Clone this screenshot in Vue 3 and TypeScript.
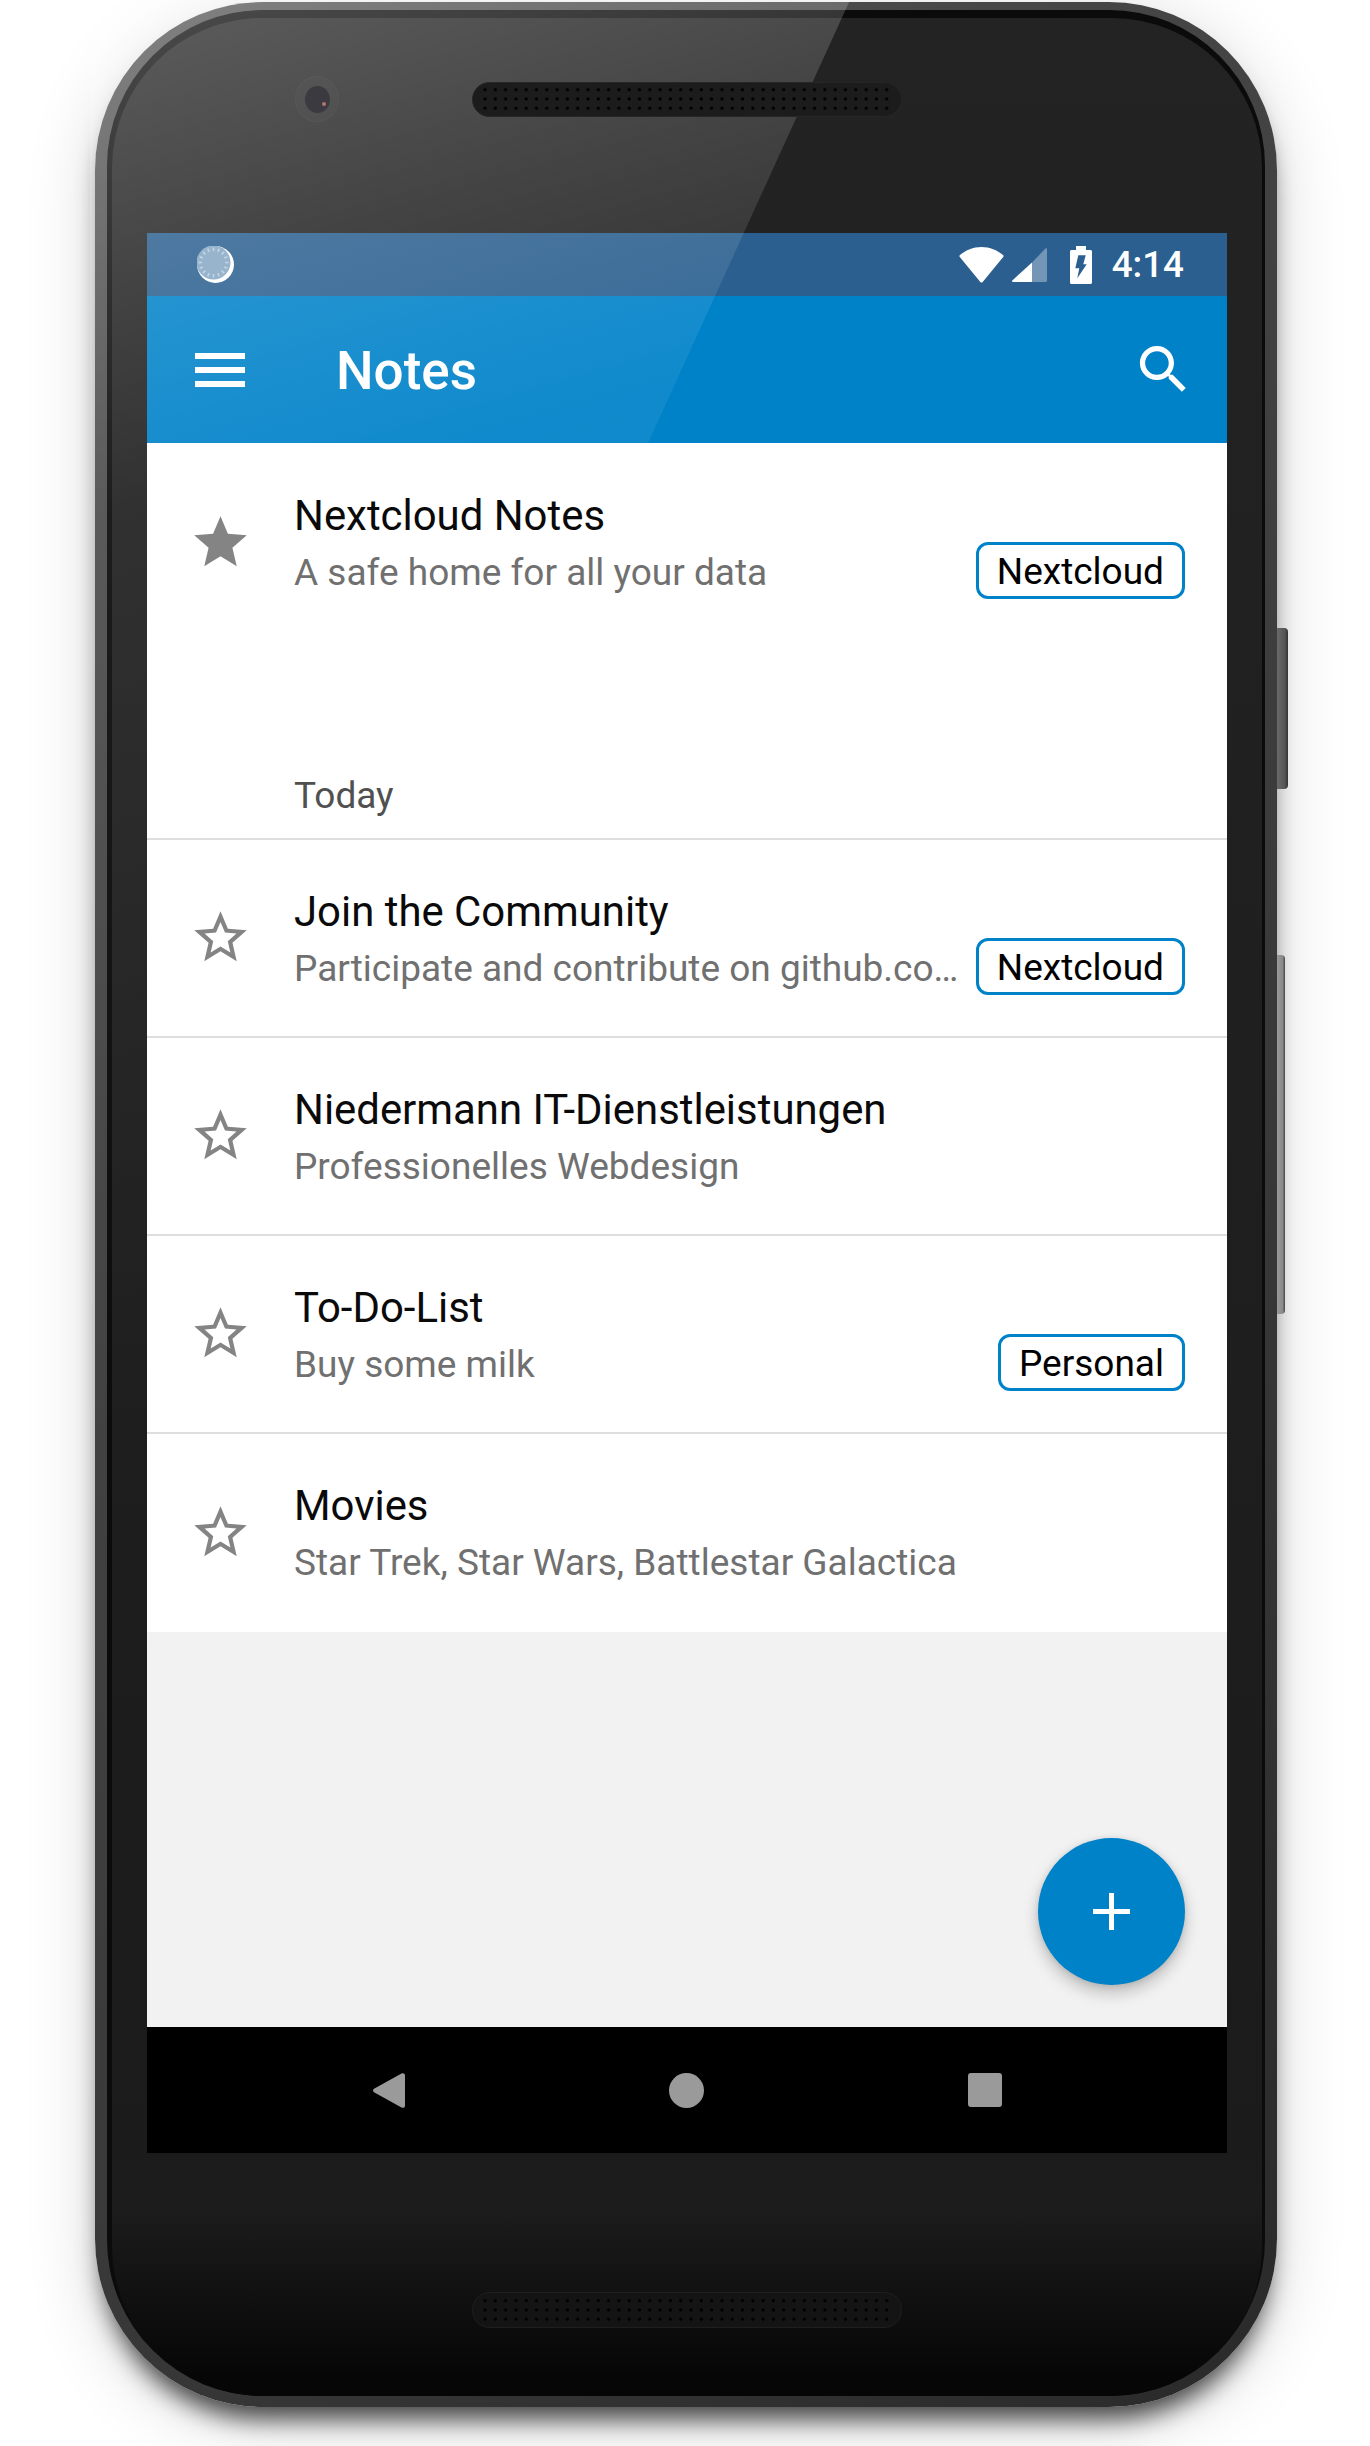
<script setup lang="ts">
interface NoteRow {
  kind: 'note'; title: string; sub: string; starred?: boolean; tag?: string
}
interface SectionRow { kind: 'section'; label: string }

const rows: (NoteRow | SectionRow)[] = [
  { kind: 'note', title: 'Nextcloud Notes', sub: 'A safe home for all your data', starred: true, tag: 'Nextcloud' },
  { kind: 'section', label: 'Today' },
  { kind: 'note', title: 'Join the Community', sub: 'Participate and contribute on github.co…', tag: 'Nextcloud' },
  { kind: 'note', title: 'Niedermann IT-Dienstleistungen', sub: 'Professionelles Webdesign' },
  { kind: 'note', title: 'To-Do-List', sub: 'Buy some milk', tag: 'Personal' },
  { kind: 'note', title: 'Movies', sub: 'Star Trek, Star Wars, Battlestar Galactica' },
]

const starFilled = 'M12 17.27L18.18 21l-1.64-7.03L22 9.24l-7.19-.61L12 2 9.19 8.63 2 9.24l5.46 4.73L5.82 21z'
const starOutline = 'M22 9.24l-7.19-.62L12 2 9.19 8.63 2 9.24l5.46 4.73L5.82 21 12 17.27 18.18 21l-1.63-7.03L22 9.24zM12 15.4l-3.76 2.27 1-4.28-3.32-2.88 4.38-.38L12 6.1l1.71 4.04 4.38.38-3.32 2.88 1 4.28L12 15.4z'

// little dashes round the loading disc in the status bar
const ticks = Array.from({ length: 16 }, (_, i) => {
  const a = (i / 16) * Math.PI * 2
  return {
    x1: 16.5 + Math.cos(a) * 11.5, y1: 16.5 + Math.sin(a) * 11.5,
    x2: 16.5 + Math.cos(a) * 15, y2: 16.5 + Math.sin(a) * 15,
  }
})
</script>

<template>
  <div class="page">
    <div class="phone">
      <div class="btn-power"></div>
      <div class="btn-volume"></div>
      <div class="rim">
        <div class="bezel">
          <div class="bezel-top">
            <div class="camera"><div class="lens"><span class="glint"></span></div></div>
            <svg class="speaker" width="430" height="35" viewBox="0 0 430 35">
              <defs>
                <pattern id="dots-top" patternUnits="userSpaceOnUse" width="10.3" height="9.3" x="8" y="3">
                  <circle cx="5" cy="4.65" r="1.7" fill="#000" />
                </pattern>
              </defs>
              <rect x=".5" y=".5" width="429" height="34" rx="17" fill="#1c1c1c" stroke="#262626" />
              <rect x="8" y="3" width="414" height="28" fill="url(#dots-top)" />
            </svg>
          </div>

          <div class="screen">
            <div class="statusbar">
              <svg class="loader" width="37" height="37" viewBox="0 0 37 37">
                <circle cx="18.5" cy="18.5" r="18.5" fill="#fff" />
                <circle cx="16.5" cy="16.5" r="17" fill="#86a7c4" />
                <line v-for="(t, i) in ticks" :key="i" :x1="t.x1" :y1="t.y1" :x2="t.x2" :y2="t.y2" stroke="#b9cddf" stroke-width="1.6" />
              </svg>
              <div class="status-right">
                <svg width="45" height="36" viewBox="0 0 45 36"><path fill="#fff" d="M22.5 35.5c-.8 0-1.2-.5-1.6-1L.8 10c-.6-.8-.5-1.4.2-2C7 3 14 0 22.5 0S38 3 44 8c.7.6.8 1.2.2 2L24.1 34.5c-.4.5-.8 1-1.6 1z" /></svg>
                <svg class="signal" width="35" height="34" viewBox="0 0 35 34">
                  <path fill="#fff" fill-opacity=".35" d="M20 14.6L33.4.6c.6-.6 1.6-.2 1.6.6V32.5c0 .8-.7 1.5-1.5 1.5H20z" />
                  <path fill="#fff" d="M20 14.6V34H1c-.9 0-1.3-1-.7-1.6z" />
                </svg>
                <svg class="battery" width="22" height="38" viewBox="0 0 22 38"><path fill="#fff" fill-rule="evenodd" d="M6 0h10v4h4.5c.8 0 1.5.7 1.5 1.5v31c0 .8-.7 1.500-1.500 1.500H1.500C.7 38 0 37.300 0 36.500v-31C0 4.700.7 4 1.500 4H6zM8.300 9.300L5.300 22.300h4L7.300 32.300 16.700 18.300h-3.400L15.700 9.300z" /></svg>
                <span class="time">4:14</span>
              </div>
            </div>

            <div class="toolbar">
              <svg class="menu" width="50" height="34" viewBox="0 0 50 34">
                <rect width="50" height="6" fill="#fff" /><rect y="14" width="50" height="6" fill="#fff" /><rect y="28" width="50" height="6" fill="#fff" />
              </svg>
              <span class="toolbar-title">Notes</span>
              <svg class="search" width="63" height="63" viewBox="0 0 24 24"><path fill="#fff" d="M15.5 14h-.79l-.28-.27C15.41 12.59 16 11.11 16 9.500 16 5.910 13.090 3 9.500 3S3 5.910 3 9.500 5.910 16 9.500 16c1.610 0 3.090-.59 4.230-1.570l.27.28v.79l5 4.990L20.490 19l-4.990-5zm-6 0C7.010 14 5 11.990 5 9.500S7.010 5 9.500 5 14 7.010 14 9.500 11.990 14 9.500 14z" /></svg>
            </div>

            <div class="content">
              <div class="list">
                <template v-for="(r, i) in rows" :key="i">
                  <div v-if="r.kind === 'section'" class="section">{{ r.label }}</div>
                  <div v-else class="row">
                    <svg class="star" width="63" height="63" viewBox="0 0 24 24"><path fill="#848484" :d="r.starred ? starFilled : starOutline" /></svg>
                    <div class="row-body">
                      <div class="row-title">{{ r.title }}</div>
                      <div class="row-sub">{{ r.sub }}</div>
                    </div>
                    <span v-if="r.tag" class="tag">{{ r.tag }}</span>
                  </div>
                </template>
              </div>
              <div class="fab">
                <svg width="37" height="37" viewBox="0 0 37 37"><rect y="16" width="37" height="5" fill="#fff" /><rect x="16" width="5" height="37" fill="#fff" /></svg>
              </div>
            </div>

            <div class="navbar">
              <svg width="32" height="35" viewBox="0 0 32 35"><path fill="#9a9a9a" d="M28.500.6c1.500-1 3.500-.2 3.500 1.600v30.600c0 1.800-2 2.600-3.500 1.600L1 19.300c-1.300-.8-1.300-2.800 0-3.600z" /></svg>
              <span class="nav-circle"></span>
              <span class="nav-square"></span>
            </div>
          </div>

          <div class="bezel-bottom">
            <svg width="430" height="36" viewBox="0 0 430 36">
              <defs>
                <pattern id="dots-bottom" patternUnits="userSpaceOnUse" width="10.3" height="9.3" x="8" y="4">
                  <circle cx="5" cy="4.65" r="1.7" fill="#000" />
                </pattern>
              </defs>
              <rect x=".5" y=".5" width="429" height="35" rx="17" fill="#141414" stroke="#1f1f1f" />
              <rect x="8" y="4" width="414" height="28" fill="url(#dots-bottom)" />
            </svg>
          </div>
        </div>
      </div>
    </div>

    <!-- light streak across the glass, stops at the toolbar -->
    <svg class="glare" width="1370" height="2446" viewBox="0 0 1370 2446">
      <defs>
        <linearGradient id="glare-grad" gradientUnits="userSpaceOnUse" x1="250" y1="0" x2="620" y2="1300">
          <stop offset="0" stop-color="#fff" stop-opacity=".25" />
          <stop offset=".18" stop-color="#fff" stop-opacity=".15" />
          <stop offset=".34" stop-color="#fff" stop-opacity=".07" />
          <stop offset="1" stop-color="#fff" stop-opacity="0" />
        </linearGradient>
      </defs>
      <path fill="url(#glare-grad)" d="M90 0H850L648 443H147V1700H90z" />
    </svg>
  </div>
</template>

<style scoped>
.page {
  position: relative;
  width: 1370px;
  height: 2446px;
  overflow: hidden;
  background: #fff;
  font-family: Roboto, "Noto Sans", sans-serif;
}
.phone {
  position: relative;
  box-sizing: border-box;
  width: 1182px;
  height: 2405px;
  margin: 2px 0 0 95px;
  padding: 8px 12px 11px;
  border-radius: 168px;
  background: linear-gradient(135deg, #555 0, #454545 30%, #3a3a3a 60%, #2a2a2a 100%);
  box-shadow: 0 20px 24px -8px rgba(0, 0, 0, .7), 0 14px 70px 0 rgba(0, 0, 0, .16);
}
.btn-power, .btn-volume {
  position: absolute;
  left: 100%;
  border-radius: 0 4px 4px 0;
}
.btn-power {
  top: 626px;
  width: 11px;
  height: 161px;
  background: linear-gradient(90deg, #6a6a6a, #555 70%, #333);
}
.btn-volume {
  top: 953px;
  width: 8px;
  height: 359px;
  background: linear-gradient(90deg, #9a9a9a, #8a8a8a 70%, #444);
}
.rim {
  box-sizing: border-box;
  height: 100%;
  padding: 8px 3px 0 5px;
  border-radius: 156px;
  background: #0b0b0b;
}
.bezel {
  display: flex;
  flex-direction: column;
  height: 100%;
  border-radius: 150px;
  background: linear-gradient(180deg, #232323 0, #1b1b1b 2130px, #1c1c1c 2190px, #060606 2360px);
}
.bezel-top {
  display: flex;
  align-items: center;
  height: 215px;
  box-sizing: border-box;
  padding: 0 0 53px 183px;
  gap: 133px;
  flex: none;
}
.camera {
  display: flex;
  align-items: center;
  justify-content: center;
  width: 44px;
  height: 46px;
  border-radius: 50%;
  background: rgba(255, 255, 255, .02);
  border: 1px solid rgba(255, 255, 255, .03);
  box-sizing: border-box;
}
.lens {
  position: relative;
  z-index: 2;
  width: 25px;
  height: 27px;
  border-radius: 50%;
  background: #3b3a41;
}
.glint {
  position: absolute;
  right: 4px;
  bottom: 7px;
  width: 4px;
  height: 4px;
  border-radius: 50%;
  background: #b5726e;
}
.speaker {
  position: relative;
  z-index: 2;
  flex: none;
}
.screen {
  display: flex;
  flex-direction: column;
  flex: none;
  height: 1920px;
  margin: 0 35px;
}
.statusbar {
  display: flex;
  align-items: center;
  justify-content: space-between;
  height: 63px;
  padding: 0 43px 0 50px;
  background: #2a5f8f;
  flex: none;
}
.status-right {
  display: flex;
  align-items: center;
}
.signal { margin-left: 8px; }
.battery { margin-left: 23px; }
.time {
  margin-left: 20px;
  color: #fff;
  font-size: 36.75px;
  font-weight: 500;
  line-height: 40px;
}
.toolbar {
  display: flex;
  align-items: center;
  height: 147px;
  padding: 0 32px 0 48px;
  background: #0082c9;
  flex: none;
}
.menu { margin-right: 91px; }
.toolbar-title {
  flex: 1;
  padding-top: 3px;
  color: #fff;
  font-size: 53px;
  font-weight: 500;
}
.content {
  position: relative;
  flex: 1;
  background: #f2f2f2;
}
.list { background: #fff; }
.row {
  display: flex;
  box-sizing: border-box;
  height: 199px;
  margin-bottom: -1px;
  padding: 0 42px 0 42px;
  border-bottom: 2px solid #dedede;
}
.row:first-child, .row:last-child { border-bottom: 0; }
.star {
  flex: none;
  align-self: center;
  margin-right: 42px;
}
.row-body {
  flex: 1;
  min-width: 0;
  margin-right: 14px;
  padding-top: 46px;
}
.row-title {
  color: #0a0a0a;
  font-size: 41.9px;
  line-height: 54px;
}
.row-sub {
  margin-top: 6px;
  overflow: hidden;
  color: #707070;
  font-size: 37px;
  line-height: 48px;
  text-overflow: ellipsis;
  white-space: nowrap;
}
.tag {
  flex: none;
  align-self: flex-start;
  box-sizing: border-box;
  height: 57px;
  margin-top: 99px;
  padding: 0 18px;
  border: 3px solid #0082c9;
  border-radius: 12px;
  color: #000;
  font-size: 37px;
  line-height: 53px;
}
.section {
  display: flex;
  align-items: flex-end;
  box-sizing: border-box;
  height: 199px;
  margin-bottom: -1px;
  padding: 0 0 18px 147px;
  border-bottom: 2px solid #dedede;
  color: #505050;
  font-size: 37px;
  line-height: 48px;
}
.fab {
  position: absolute;
  right: 42px;
  bottom: 42px;
  display: flex;
  align-items: center;
  justify-content: center;
  width: 147px;
  height: 147px;
  border-radius: 50%;
  background: #0082c9;
  box-shadow: 0 8px 16px rgba(0, 0, 0, .22), 0 1px 6px rgba(0, 0, 0, .1);
}
.navbar {
  display: flex;
  align-items: center;
  justify-content: center;
  gap: 264px;
  height: 126px;
  background: #000;
  flex: none;
}
.nav-circle {
  width: 35px;
  height: 35px;
  border-radius: 50%;
  background: #9a9a9a;
}
.nav-square {
  width: 34px;
  height: 34px;
  border-radius: 3px;
  background: #9a9a9a;
}
.bezel-bottom {
  flex: 1;
  padding: 139px 0 0 360px;
}
.glare {
  position: absolute;
  top: 0;
  left: 0;
  z-index: 1;
  pointer-events: none;
}
</style>

<style>
html, body { margin: 0; background: #fff; }
</style>
